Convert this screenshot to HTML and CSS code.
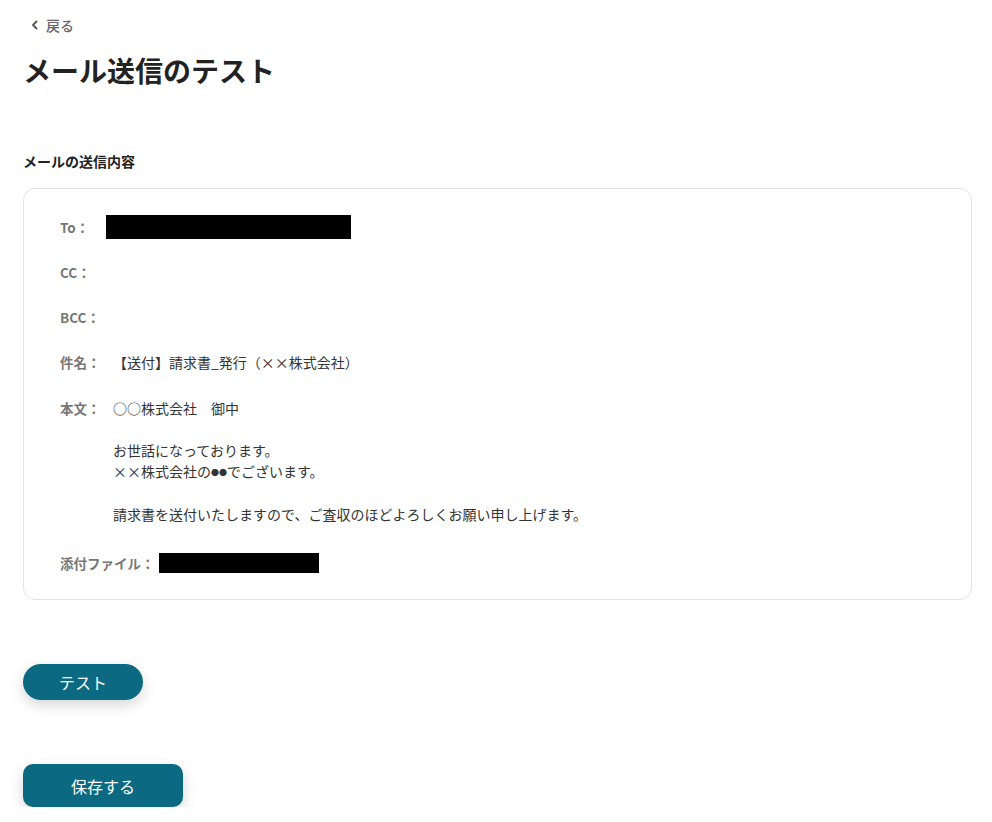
FILE: index.html
```html
<!DOCTYPE html>
<html lang="ja">
<head>
<meta charset="utf-8">
<title>メール送信のテスト</title>
<link rel="stylesheet" href="styles.css">
</head>
<body>
<div class="page">
  <a class="back" href="#">
    <svg class="chev" width="9" height="10" viewBox="0 0 9 10"><polyline points="6.5,1.5 3,5 6.5,8.5" fill="none" stroke="#555" stroke-width="1.8" stroke-linecap="round" stroke-linejoin="round"/></svg>
    <span>戻る</span>
  </a>
  <h1 class="title">メール送信のテスト</h1>
  <div class="section-label">メールの送信内容</div>
  <div class="card">
    <div class="row">
      <span class="label">To：</span>
      <span class="redact redact-to"></span>
    </div>
    <div class="row"><span class="label">CC：</span></div>
    <div class="row"><span class="label">BCC：</span></div>
    <div class="row">
      <span class="label">件名：</span>
      <span class="value">【送付】請求書_発行（××株式会社）</span>
    </div>
    <div class="row row-top">
      <span class="label">本文：</span>
      <div class="value body">○○株式会社　御中<br><br>お世話になっております。<br>××株式会社の<span class="dot">●●</span>でございます。<br><br>請求書を送付いたしますので、ご査収のほどよろしくお願い申し上げます。</div>
    </div>
    <div class="row row-attach">
      <span class="label">添付ファイル：</span>
      <span class="redact redact-file"></span>
    </div>
  </div>
  <div class="actions">
    <button class="btn btn-test">テスト</button>
    <button class="btn btn-save">保存する</button>
  </div>
</div>
</body>
</html>
```
FILE: styles.css
```css
* { box-sizing: border-box; }
html, body { margin: 0; padding: 0; background: #fff; }
body {
  font-family: "Noto Sans CJK JP", "Noto Sans", sans-serif;
  color: #333;
}
.page {
  padding: 16px 20px 0 23px;
}
.back {
  display: flex;
  align-items: center;
  gap: 7px;
  height: 18px;
  padding-left: 7px;
  font-size: 14px;
  color: #666;
  text-decoration: none;
  font-weight: 500;
}
.chev { display: block; }
.title {
  margin: 16px 0 0;
  font-size: 28px;
  line-height: 40px;
  font-weight: 700;
  color: #222;
}
.section-label {
  margin-top: 61px;
  font-size: 14px;
  line-height: 20px;
  font-weight: 700;
  color: #222;
}
.card {
  margin-top: 17px;
  border: 1px solid #e3e3e3;
  border-radius: 12px;
  padding: 26px 36px 24px;
  display: flex;
  flex-direction: column;
  gap: 21px;
}
.row {
  display: flex;
  align-items: center;
  min-height: 24px;
  font-size: 14px;
  line-height: 21px;
}
.row-top { align-items: flex-start; padding-top: 3px; }
.row-attach { margin-top: 5px; }
.label {
  color: #777;
  font-weight: 700;
  font-size: 13.5px;
  flex: none;
  width: 53px;
}
.row-attach .label { width: auto; margin-right: 4px; }
.value { color: #333; }
.dot { font-size: 8px; vertical-align: 1px; }
.redact { display: block; background: #000; }
.redact-to { width: 245px; height: 24px; margin-left: -7px; }
.redact-file { width: 160px; height: 20px; }
.actions {
  display: flex;
  flex-direction: column;
  align-items: flex-start;
  gap: 64px;
  margin-top: 64px;
}
.btn {
  border: none;
  background: #0b6a82;
  color: #fff;
  font-family: inherit;
  font-size: 16px;
  box-shadow: 0 5px 14px rgba(0, 0, 0, 0.16);
  cursor: pointer;
}
.btn-test { width: 120px; height: 36px; border-radius: 18px; }
.btn-save { width: 160px; height: 43px; border-radius: 10px; }
```
